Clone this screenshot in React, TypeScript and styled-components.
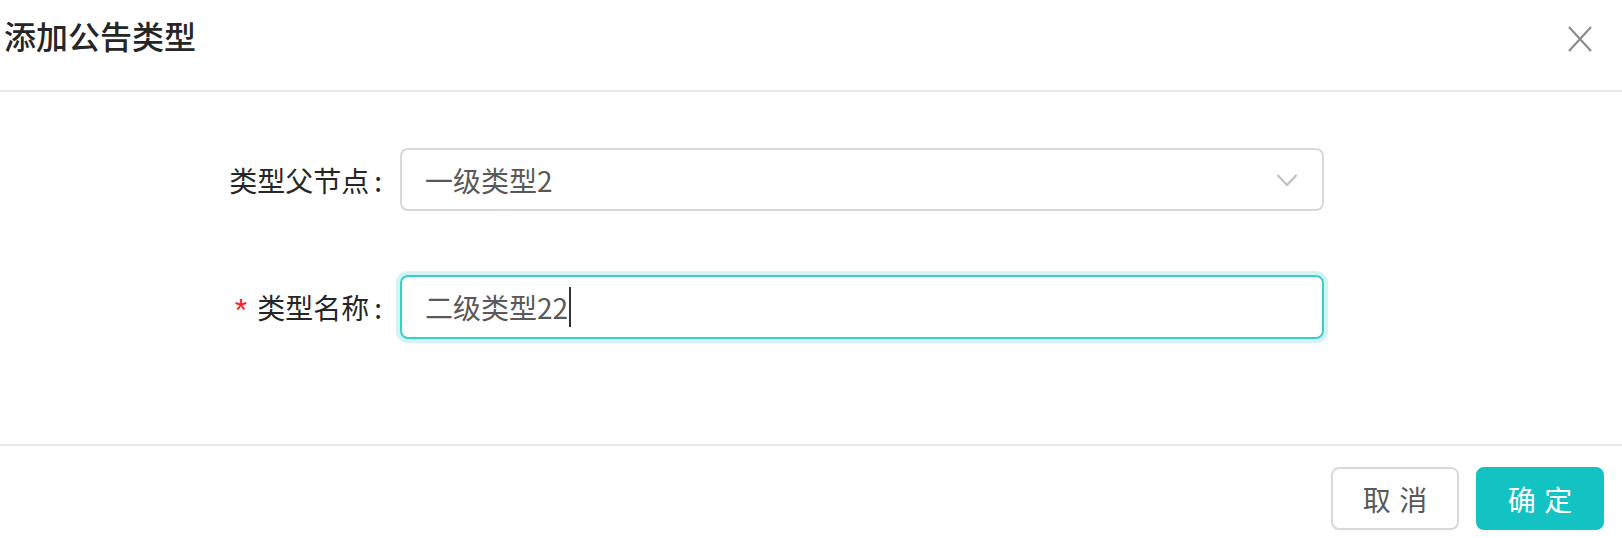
import React from 'react';
import styled, { createGlobalStyle } from 'styled-components';

const GlobalStyles = createGlobalStyle`
  html, body {
    margin: 0;
    padding: 0;
    background: #ffffff;
    font-family: "Noto Sans CJK SC", "Noto Sans", sans-serif;
  }
`;

const Modal = styled.div`
  width: 1622px;
  height: 538px;
  display: flex;
  flex-direction: column;
  background: #fff;
  overflow: hidden;
`;

const Header = styled.header`
  height: 92px;
  display: flex;
  align-items: center;
  justify-content: space-between;
  padding: 0 30px 20px 4px;
  box-sizing: border-box;
  border-bottom: 2px solid #e8e8e8;
  flex-shrink: 0;
`;

const Title = styled.h1`
  margin: 0;
  font-size: 32px;
  font-weight: 500;
  color: #262626;
  line-height: 40px;
`;

const CloseButton = styled.button`
  width: 24px;
  height: 26px;
  padding: 0;
  border: none;
  background: transparent;
  display: flex;
  align-items: center;
  justify-content: center;
  position: relative;
  top: 4px;
`;

const Body = styled.main`
  flex: 1;
  display: flex;
  flex-direction: column;
  gap: 64px;
  padding-top: 56px;
`;

const Row = styled.div`
  display: flex;
  align-items: center;
  height: 63px;
`;

const Label = styled.label`
  width: 400px;
  flex-shrink: 0;
  display: flex;
  justify-content: flex-end;
  align-items: center;
  padding-right: 18px;
  box-sizing: border-box;
  font-size: 28px;
  color: #262626;

  &::after {
    content: ':';
    margin-left: 5px;
  }
`;

const Required = styled.span`
  color: #f5222d;
  font-family: "Liberation Sans", sans-serif;
  font-size: 32px;
  margin-right: 10px;
  line-height: 1;
  position: relative;
  top: 3px;
`;

const Field = styled.div<{ $focused?: boolean }>`
  width: 924px;
  height: ${(p) => (p.$focused ? '64px' : '63px')};
  box-sizing: border-box;
  border: 2px solid ${(p) => (p.$focused ? '#36cfc9' : '#d9d9d9')};
  border-radius: 8px;
  box-shadow: ${(p) => (p.$focused ? '0 0 0 4px rgba(19, 194, 194, 0.18)' : 'none')};
  display: flex;
  align-items: center;
  justify-content: space-between;
  padding: 0 24px 0 23px;
  font-size: 28px;
  color: #595959;
`;

const Value = styled.span`
  display: flex;
  align-items: center;
`;

const Caret = styled.span`
  display: inline-block;
  width: 2px;
  height: 40px;
  background: #333;
  margin-left: 1px;
`;

const Footer = styled.footer`
  height: 94px;
  border-top: 2px solid #e8e8e8;
  box-sizing: border-box;
  display: flex;
  justify-content: flex-end;
  align-items: flex-start;
  gap: 17px;
  padding: 21px 18px 0 0;
  flex-shrink: 0;
`;

const Button = styled.button<{ $primary?: boolean }>`
  width: 128px;
  height: 63px;
  box-sizing: border-box;
  border-radius: 8px;
  border: 2px solid ${(p) => (p.$primary ? '#13c2c2' : '#d9d9d9')};
  background: ${(p) => (p.$primary ? '#13c2c2' : '#fff')};
  color: ${(p) => (p.$primary ? '#fff' : '#595959')};
  font-family: "Noto Sans CJK SC", sans-serif;
  font-size: 28px;
  box-shadow: 0 2px 0 rgba(0, 0, 0, 0.02);
  padding: 0;
  word-spacing: 2px;
`;

function Chevron() {
  return (
    <svg width="22" height="14" viewBox="0 0 22 14" fill="none">
      <path d="M1.5 2 L11 12 L20.5 2" stroke="#bfbfbf" strokeWidth="2" />
    </svg>
  );
}

function CloseIcon() {
  return (
    <svg width="24" height="26" viewBox="0 0 24 26" fill="none">
      <path d="M1 1 L23 25 M23 1 L1 25" stroke="#8c8c8c" strokeWidth="2.2" />
    </svg>
  );
}

export default function App() {
  return (
    <>
      <GlobalStyles />
      <Modal>
        <Header>
          <Title>添加公告类型</Title>
          <CloseButton aria-label="关闭">
            <CloseIcon />
          </CloseButton>
        </Header>
        <Body>
          <Row>
            <Label>类型父节点</Label>
            <Field>
              <Value>一级类型2</Value>
              <Chevron />
            </Field>
          </Row>
          <Row>
            <Label>
              <Required>*</Required>类型名称
            </Label>
            <Field $focused>
              <Value>
                二级类型22<Caret />
              </Value>
            </Field>
          </Row>
        </Body>
        <Footer>
          <Button>取 消</Button>
          <Button $primary>确 定</Button>
        </Footer>
      </Modal>
    </>
  );
}
